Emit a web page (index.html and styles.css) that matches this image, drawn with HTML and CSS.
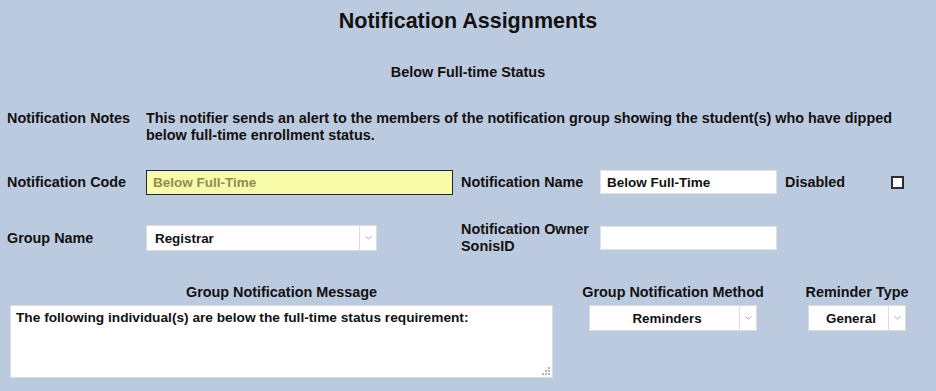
FILE: index.html
```html
<!DOCTYPE html>
<html lang="en">
<head>
    <meta charset="UTF-8">
    <meta name="viewport" content="width=device-width, initial-scale=1.0">
    <title>Notification Assignments</title>
    <link rel="stylesheet" href="styles.css">
</head>
<body>
    <h1 class="page-title">Notification Assignments</h1>
    <h2 class="sub-title">Below Full-time Status</h2>

    <div class="notes-row">
        <span class="label">Notification Notes</span>
        <p class="notes-text">This notifier sends an alert to the members of the notification group showing the student(s) who have dipped below full-time enrollment status.</p>
    </div>

    <div class="form-grid">
        <label class="label" for="notifCode">Notification Code</label>
        <input type="text" id="notifCode" class="field field-locked" value="Below Full-Time" readonly>
        <label class="label" for="notifName">Notification Name</label>
        <input type="text" id="notifName" class="field field-name" value="Below Full-Time">
        <div class="disabled-cell">
            <label class="label" for="notifDisabled">Disabled</label>
            <input type="checkbox" id="notifDisabled" class="check">
        </div>

        <label class="label" for="groupName">Group Name</label>
        <div class="select-wrap select-group">
            <select id="groupName" class="select">
                <option>Registrar</option>
            </select>
            <span class="select-arrow"><svg width="7" height="4" viewBox="0 0 7 4"><path d="M0.5 0.5 L3.5 3 L6.5 0.5" fill="none" stroke="#a8a8a8" stroke-width="1"/></svg></span>
        </div>
        <label class="label" for="ownerId">Notification Owner SonisID</label>
        <input type="text" id="ownerId" class="field field-name">
        <div></div>
    </div>

    <div class="message-row">
        <div class="message-col">
            <label class="col-head" for="groupMessage">Group Notification Message</label>
            <div class="message-wrap">
                <textarea id="groupMessage" class="message-box">The following individual(s) are below the full-time status requirement:</textarea>
                <svg class="grip" width="8" height="8" viewBox="0 0 8 8">
                    <rect x="6" y="0" width="2" height="2" fill="#b4b4b4"/>
                    <rect x="3" y="3" width="2" height="2" fill="#b4b4b4"/>
                    <rect x="6" y="3" width="2" height="2" fill="#b4b4b4"/>
                    <rect x="0" y="6" width="2" height="2" fill="#b4b4b4"/>
                    <rect x="3" y="6" width="2" height="2" fill="#b4b4b4"/>
                    <rect x="6" y="6" width="2" height="2" fill="#b4b4b4"/>
                </svg>
            </div>
        </div>
        <div class="method-col">
            <label class="col-head" for="groupMethod">Group Notification Method</label>
            <div class="select-wrap select-method">
                <select id="groupMethod" class="select centered">
                    <option>Reminders</option>
                </select>
                <span class="select-arrow"><svg width="7" height="4" viewBox="0 0 7 4"><path d="M0.5 0.5 L3.5 3 L6.5 0.5" fill="none" stroke="#a8a8a8" stroke-width="1"/></svg></span>
            </div>
        </div>
        <div class="reminder-col">
            <label class="col-head" for="reminderType">Reminder Type</label>
            <div class="select-wrap select-reminder">
                <select id="reminderType" class="select centered">
                    <option>General</option>
                </select>
                <span class="select-arrow"><svg width="7" height="4" viewBox="0 0 7 4"><path d="M0.5 0.5 L3.5 3 L6.5 0.5" fill="none" stroke="#a8a8a8" stroke-width="1"/></svg></span>
            </div>
        </div>
    </div>
</body>
</html>
```

FILE: styles.css
```css
body {
    font-family: 'Liberation Sans', Arial, sans-serif;
    font-size: 14.4px;
    font-weight: bold;
    margin: 0;
    padding: 0 7px;
    background-color: #bccae0;
    color: #111;
}

.page-title {
    margin: 0;
    padding-top: 9px;
    font-size: 21.5px;
    line-height: 24px;
    text-align: center;
}

.sub-title {
    margin: 0;
    padding-top: 31px;
    font-size: 14.4px;
    line-height: 17px;
    text-align: center;
}

.label {
    font-size: 14.4px;
    line-height: 17px;
}

.notes-row {
    display: flex;
    margin-top: 29px;
}

.notes-row .label {
    width: 139px;
    flex-shrink: 0;
}

.notes-text {
    margin: 0;
    line-height: 17px;
    width: 775px;
}

.form-grid {
    display: grid;
    grid-template-columns: 139px 315px 139px 185px auto;
    grid-template-rows: 26px 26px;
    row-gap: 30px;
    align-items: center;
    margin-top: 25px;
}

.field {
    box-sizing: border-box;
    font-family: inherit;
    font-size: 13.5px;
    font-weight: bold;
    height: 24px;
    padding: 0 6px;
    margin: 0;
    border: 1px solid #e2e2e2;
    background: #fff;
    color: #111;
    outline: none;
}

.field-locked {
    width: 307px;
    height: 25px;
    background: #f8fba8;
    border: 1px solid #1c2633;
    color: #8e8e52;
}

.field-name {
    width: 177px;
}

.disabled-cell {
    display: flex;
    align-items: center;
    justify-content: space-between;
    width: 119px;
}

.check {
    appearance: none;
    width: 13px;
    height: 13px;
    margin: 0;
    border: 2px solid #2a2d33;
    background: #fff;
}

.select-wrap {
    position: relative;
    box-sizing: border-box;
    height: 26px;
    border: 1px solid #dcdcdc;
    background: #fff;
}

.select {
    appearance: none;
    width: 100%;
    height: 100%;
    border: none;
    background: transparent;
    font-family: inherit;
    font-size: 13.4px;
    font-weight: bold;
    color: #111;
    padding: 0 0 0 8px;
    outline: none;
}

.select-arrow {
    position: absolute;
    right: 0;
    top: 0;
    box-sizing: border-box;
    width: 17px;
    height: 100%;
    border-left: 1px solid #dcdcdc;
    display: flex;
    align-items: center;
    justify-content: center;
    pointer-events: none;
}

.select-group {
    width: 231px;
}

.message-row {
    display: flex;
    margin-top: 33px;
}

.col-head {
    display: block;
    text-align: center;
    line-height: 17px;
    margin-bottom: 4px;
}

.message-col {
    margin-left: 3px;
    width: 543px;
}

.message-wrap {
    position: relative;
}

.message-box {
    box-sizing: border-box;
    display: block;
    width: 543px;
    height: 73px;
    margin: 0;
    padding: 4px 5px;
    border: 1px solid #dcdcdc;
    background: #fff;
    font-family: inherit;
    font-size: 13.7px;
    font-weight: bold;
    color: #111;
    outline: none;
    resize: none;
}

.grip {
    position: absolute;
    right: 3px;
    bottom: 3px;
}

.method-col {
    margin-left: 20px;
    width: 200px;
}

.select-method {
    width: 168px;
    margin: 0 auto;
}

.reminder-col {
    margin-left: 29px;
    width: 110px;
}

.select-reminder {
    width: 98px;
    margin: 0 auto;
}

.centered {
    text-align: center;
    text-align-last: center;
    padding: 0 12px 0 0;
}
```
